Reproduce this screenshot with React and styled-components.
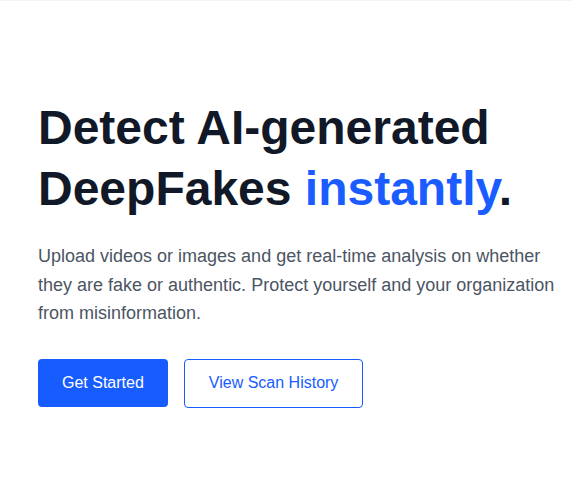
import React from "react";
import styled, { createGlobalStyle } from "styled-components";

const GlobalStyle = createGlobalStyle`
  html, body {
    margin: 0;
    padding: 0;
    background: #ffffff;
    font-family: "Liberation Sans", Arial, sans-serif;
  }
`;

const Page = styled.div`
  min-height: 482px;
  border-top: 1px solid #f3f4f6;
`;

const Hero = styled.section`
  padding: 96px 10px 0 38px;
  display: flex;
  flex-direction: column;
`;

const Title = styled.h1`
  margin: 0;
  font-size: 48px;
  line-height: 61px;
  font-weight: 700;
  color: #111827;
`;

const Accent = styled.span`
  color: #1a5cff;
`;

const Lead = styled.p`
  margin: 23px 0 0;
  font-size: 18px;
  line-height: 28.5px;
  color: #4b5563;
`;

const Actions = styled.div`
  display: flex;
  gap: 16px;
  margin-top: 31px;
`;

const Button = styled.button`
  height: ${(p) => (p.$outline ? "49px" : "48px")};
  padding: 0 24px;
  border-radius: 4px;
  font-family: inherit;
  font-size: 16px;
  cursor: pointer;
  background: ${(p) => (p.$outline ? "#ffffff" : "#175cff")};
  color: ${(p) => (p.$outline ? "#175cff" : "#ffffff")};
  border: ${(p) => (p.$outline ? "1px solid #175cff" : "none")};
`;

export default function App() {
  return (
    <>
      <GlobalStyle />
      <Page>
        <Hero>
          <Title>
            Detect AI-generated
            <br />
            DeepFakes <Accent>instantly</Accent>.
          </Title>
          <Lead>
            Upload videos or images and get real-time analysis on whether they
            are fake or authentic. Protect yourself and your organization from
            misinformation.
          </Lead>
          <Actions>
            <Button>Get Started</Button>
            <Button $outline>View Scan History</Button>
          </Actions>
        </Hero>
      </Page>
    </>
  );
}
